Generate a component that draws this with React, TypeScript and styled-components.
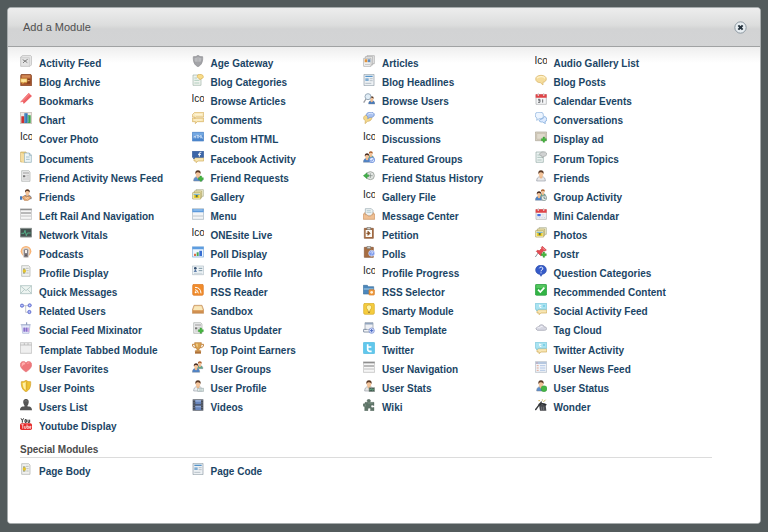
import React from "react";
import styled, { createGlobalStyle } from "styled-components";

const GlobalStyle = createGlobalStyle`
  * { box-sizing: border-box; }
  body {
    margin: 0;
    background: #535b5c;
    font-family: "Liberation Sans", Arial, sans-serif;
  }
`;

const Page = styled.main`
  min-height: 100vh;
  display: flex;
  padding: 7px 7px 8px;
`;

const Dialog = styled.section`
  flex: 1;
  min-width: 0;
  display: flex;
  flex-direction: column;
  border: 1px solid #a6abac;
  border-radius: 4px;
  background: #fff;
  overflow: hidden;
`;

const Header = styled.header`
  display: flex;
  align-items: center;
  justify-content: space-between;
  height: 39px;
  padding: 0 13px 0 15px;
  border-bottom: 1px solid #a0a2a3;
  background: linear-gradient(#ededed, #dcdddd 45%, #d2d3d4 55%, #d3d4d5);
`;

const Title = styled.h1`
  margin: 0;
  font-size: 11px;
  line-height: 16px;
  font-weight: 400;
  color: #505050;
`;

const CloseButton = styled.button`
  display: flex;
  width: 13px;
  height: 13px;
  padding: 0;
  border: 0;
  background: none;
  cursor: pointer;
`;

const Body = styled.div`
  flex: 1;
  padding: 8px 48px 24px 12px;
  background: linear-gradient(#eeeeee, #ffffff 16px);
`;

const ModuleGrid = styled.ul<{ $tall?: boolean }>`
  display: grid;
  grid-template-columns: repeat(4, 1fr);
  grid-auto-rows: minmax(19px, 1fr);
  min-height: ${(p) => (p.$tall ? "382px" : "19px")};
  margin: 0;
  padding: 0 6px 0 0;
  list-style: none;
`;

const ModuleLink = styled.a`
  display: flex;
  align-items: flex-start;
  gap: 7px;
  font-size: 10px;
  line-height: 12px;
  font-weight: 700;
  color: #1b4565;
  text-decoration: none;
  white-space: nowrap;
  &:hover { text-decoration: underline; }
`;

const Glyph = styled.svg`
  flex: none;
  display: block;
  width: 12px;
  height: 12px;
`;

const MissingIcon = styled.span`
  flex: none;
  width: 12px;
  overflow: hidden;
  font-weight: 400;
  color: #222;
`;

const Label = styled.span`
  padding-top: 3px;
`;

const SectionTitle = styled.h2`
  margin: 7px 0 5px;
  padding-bottom: 1px;
  border-bottom: 1px solid #dcdcdc;
  font-size: 10px;
  line-height: 12px;
  font-weight: 700;
  color: #4c4c4c;
`;

/* Shared icon parts, drawn on a 36 unit square */

const Person = ({ hair = "#5b3a26", shirt = "#5c8fce" }: { hair?: string; shirt?: string }) => (
  <g>
    <path d="M5 33c0-9 4-12 9-13h8c6 1 9 5 9 13z" fill={shirt} stroke="#777f8c" strokeWidth="1.5" />
    <path d="M14 17h8v5l-4 5-4-5z" fill="#eeb887" />
    <ellipse cx="18" cy="12" rx="7" ry="8" fill="#f3c49b" />
    <path d="M10 12C9 4 13 1 18 1s9 3 8 11c-3-5-7-5-10-5-3 1-4 3-6 5z" fill={hair} />
  </g>
);

const Group = () => (
  <>
    <g transform="translate(11 0) scale(.7)"><Person hair="#a85b28" shirt="#60a58c" /></g>
    <g transform="translate(-3 6) scale(.84)"><Person hair="#4c3023" shirt="#4d83c8" /></g>
  </>
);

const Plus = () => (
  <path d="M24 18h5v5h5v6h-5v5h-5v-5h-5v-6h5z" fill="#46b83f" stroke="#2c8a2b" strokeWidth="1" />
);

const Sheet = ({ fill = "#f1f1ef" }: { fill?: string }) => (
  <path d="M5 2h21l4 4v28H5z" fill={fill} stroke="#a9adab" strokeWidth="2" />
);

const NewsSheet = () => (
  <>
    <Sheet fill="#ececec" />
    <path d="M9 9h18" stroke="#9a9a9a" strokeWidth="3" />
    <path d="M9 16h7v6H9z" fill="#777" />
    <path d="M19 16h8M19 21h8M9 27h18" stroke="#b3b3b3" strokeWidth="2" />
  </>
);

const TwoBubbles = ({ top, edge }: { top: string; edge: string }) => (
  <>
    <path d="M6 20h29v10H18l-6 5v-5H6z" fill="#f8e6b4" stroke="#ceaa55" strokeWidth="2" />
    <path d="M1 1h34v18H10l-5 5v-5H1z" fill={top} stroke={edge} strokeWidth="2" />
  </>
);

const Rails = () => (
  <>
    <path d="M1 2h34v32H1z" fill="#f6f6f6" stroke="#b5b5b5" strokeWidth="2" />
    <path d="M1 3h34v4H1z" fill="#8e8e8e" />
    <path d="M3 15h30" stroke="#7d7d7d" strokeWidth="3" />
    <path d="M3 24h30" stroke="#a4a4a4" strokeWidth="2" />
  </>
);

const Photos = () => (
  <>
    <path d="M12 2h22v20H12z" fill="#f5f2d4" stroke="#a5a98c" strokeWidth="2" />
    <path d="M7 6h22v20H7z" fill="#f9f1b9" stroke="#a69c60" strokeWidth="2" />
    <path d="M2 11h24v19H2z" fill="#fffbe0" stroke="#a6994f" strokeWidth="2" />
    <path d="M5 14h18v13H5z" fill="#edcf2c" />
    <path d="M5 14h18v4H5z" fill="#7fb8d8" />
    <path d="M11 18h6v7h-6z" fill="#5b6e4d" />
  </>
);

const Calendar = ({ children }: { children: React.ReactNode }) => (
  <>
    <path d="M3 5h31v29H3z" fill="#f5f6f8" stroke="#a7a9ad" strokeWidth="2" />
    <path d="M2 4h33v10H2z" fill="#df4548" />
    <path d="M10 1v7M26 1v7" stroke="#fff" strokeWidth="4" />
    <path d="M10 1v6M26 1v6" stroke="#956061" strokeWidth="1.5" />
    {children}
  </>
);

const Clipboard = () => (
  <>
    <path d="M4 4h27v30H4z" fill="#a66d42" stroke="#8a5636" strokeWidth="2" />
    <path d="M12 1h11v7H12z" fill="#d1d1ce" stroke="#77736c" strokeWidth="2" />
  </>
);

const ShieldShape = "M18 1c5 4 10 4 14 4 1 15-3 25-14 30C7 30 3 20 4 5c4 0 9 0 14-4z";

const Twitterish = () => (
  <>
    <TwoBubbles top="#a9e3f1" edge="#74c3da" />
    <path d="M14 5v6q0 3 5 3M14 8h5" fill="none" stroke="#fff" strokeWidth="3" />
    <path d="M24 6h6v6h-6z" fill="#7fd0e7" />
  </>
);

const icons: Record<string, React.ReactNode> = {
  sketch: (
    <>
      <path d="M9 1h22l4 4v24l-5 5H2V6z" fill="#e4e4e4" stroke="#b0b0b0" strokeWidth="2" />
      <path d="M3 8h25v25" fill="none" stroke="#c5c5c5" strokeWidth="2" />
      <path d="M8 14l7 4 8-5M9 24l6-6 7 5" fill="none" stroke="#808080" strokeWidth="3" />
    </>
  ),
  shieldGray: (
    <>
      <path d={ShieldShape} fill="#a2a3a7" stroke="#8f9094" strokeWidth="2" />
      <path d="M18 5c4 3 8 4 10 4 0 4 0 7-2 11H9C7 16 8 12 8 9c4 0 7-1 10-4z" fill="#b9babd" />
      <path d="M18 5v26" stroke="#a9aaae" strokeWidth="2" />
    </>
  ),
  articles: (
    <>
      <path d="M12 2h22v24H12z" fill="#eee" stroke="#a2a2a2" strokeWidth="2" />
      <path d="M7 5h22v25H7z" fill="#ececec" stroke="#a2a2a2" strokeWidth="2" />
      <path d="M2 10h22v24H2z" fill="#f8f8f7" stroke="#a2a2a2" strokeWidth="2" />
      <path d="M5 13h8v9H5z" fill="#e0933c" />
      <path d="M14 13h8v9h-8z" fill="#668fbd" />
      <path d="M6 28h15" stroke="#a7a7a7" strokeWidth="2" />
    </>
  ),
  archive: (
    <>
      <path d="M4 1h28l3 4v30H2V5z" fill="#aa5930" stroke="#7d401f" strokeWidth="2" />
      <path d="M5 4h26v7H5z" fill="#d38a55" />
      <path d="M20 15h11v14H20z" fill="#883e1d" />
      <path d="M2 14h19v11h-9l-4 4v-4H2z" fill="#ffe69c" stroke="#dba33c" strokeWidth="2" />
      <path d="M23 20h6" stroke="#e7b183" strokeWidth="3" />
    </>
  ),
  category: (
    <>
      <path d="M3 3h24v31H3z" fill="#f0f4ef" stroke="#9eb4a7" strokeWidth="2" />
      <path d="M7 12h8M7 19h15M7 27h15" stroke="#93bba6" strokeWidth="2" />
      <path d="M17 3c5-4 17-2 17 5 0 4-3 6-7 6l-3 4-1-4c-7-1-9-7-6-11z" fill="#f8dc8a" stroke="#d9b055" strokeWidth="2" />
    </>
  ),
  headline: (
    <>
      <path d="M3 1h30v34H3z" fill="#edf1f4" stroke="#8b98a3" strokeWidth="2" />
      <path d="M7 7h22" stroke="#5694c9" strokeWidth="4" />
      <path d="M7 13h10v8H7z" fill="#81add2" />
      <path d="M20 14h9M20 20h9M7 28h18" stroke="#9ba8b2" strokeWidth="2" />
    </>
  ),
  bubble: (
    <>
      <path d="M18 4c9 0 16 4 16 11 0 5-4 9-10 10v8l-8-7C8 26 2 22 2 15 2 8 9 4 18 4z" fill="#f5dc9b" stroke="#d6b369" strokeWidth="2" />
      <path d="M6 13c2-5 20-8 24 0" fill="none" stroke="#fff2ca" strokeWidth="4" />
    </>
  ),
  bookmark: (
    <>
      <path d="M26 0l10 9L11 33l-2-6-9 1z" fill="#ee6266" />
      <path d="M26 1l4 3L7 27l-5 0z" fill="#f58284" />
    </>
  ),
  search: (
    <>
      <g transform="translate(13 9) scale(.73)"><Person shirt="#477bbc" /></g>
      <path d="M9 18L2 29" stroke="#9a9ba0" strokeWidth="4" />
      <circle cx="15" cy="11" r="9" fill="#dceaf4" fillOpacity=".85" stroke="#9aabba" strokeWidth="3" />
    </>
  ),
  calendarDate: (
    <Calendar>
      <path d="M9 19h6v9M10 23h5M9 28h6M23 19v10" fill="none" stroke="#6e7074" strokeWidth="3" />
    </Calendar>
  ),
  calendarMini: (
    <Calendar>
      <path d="M7 18h10v7H7z" fill="#456fe0" />
      <path d="M20 19h10M20 24h10M7 29h23" stroke="#b8bed2" strokeWidth="2" strokeDasharray="3 2" />
    </Calendar>
  ),
  chart: (
    <>
      <path d="M1 1h34v34H1z" fill="#eee8e3" stroke="#b6aaa1" strokeWidth="2" />
      <path d="M4 13h9v20H4z" fill="#cb3230" />
      <path d="M13 4h10v29H13z" fill="#3575bc" />
      <path d="M23 10h9v23h-9z" fill="#3ca64b" />
      <path d="M15 6v25M25 12v19" stroke="#70b6cc" strokeWidth="2" />
    </>
  ),
  comments: (
    <>
      <path d="M1 18h34v11H16l-6 6v-6H1z" fill="#f7e3ad" stroke="#d4ad5c" strokeWidth="2" />
      <path d="M8 1h27v14H13l-5 5v-5H1V8z" fill="#f9e9bc" stroke="#d4ad5c" strokeWidth="2" />
      <path d="M9 8h21M6 24h23" stroke="#fff5d9" strokeWidth="3" />
    </>
  ),
  commentsRound: (
    <>
      <path d="M12 9c9-1 16 4 14 11-1 5-7 8-12 8l-8 7 1-9C-2 21 1 10 12 9z" fill="#f4d88a" stroke="#d0ae62" strokeWidth="2" />
      <path d="M20 1c8-2 15 2 14 8-1 5-6 8-13 7l-7 4 1-6C6 10 10 2 20 1z" fill="#a9c1ef" stroke="#6c8fcf" strokeWidth="2" />
      <path d="M14 8c3-5 12-5 16-2" fill="none" stroke="#e0eafe" strokeWidth="3" />
    </>
  ),
  conversation: (
    <>
      <path d="M8 1h10q7 0 7 7v5q0 7-7 7h-5l-8 5 1-7q-5-2-5-6V8q0-7 7-7z" fill="#edf5ff" stroke="#83acd9" strokeWidth="2" />
      <path d="M28 13q7 2 7 8v2q0 5-5 6l1 6-8-5h-4q-6 0-7-5l6-3q9-2 10-9z" fill="#dceaff" stroke="#73a1d5" strokeWidth="2" />
    </>
  ),
  html: (
    <>
      <path d="M1 4h34v26H1z" fill="#4a86ce" stroke="#4f83c4" strokeWidth="2" />
      <path d="M2 5h32v8H2z" fill="#73a8e2" />
      <path d="M6 13v9M11 13v9M6 17h5M13 13h6M16 13v9M20 22v-9l3 4 3-4v9M29 13v8h4" fill="none" stroke="#eaf5ff" strokeWidth="2" />
    </>
  ),
  ad: (
    <>
      <path d="M1 3h34v26H1z" fill="#e0dacd" stroke="#a8a091" strokeWidth="2" />
      <path d="M5 7h26v18H5z" fill="none" stroke="#beb5a5" strokeWidth="2" />
      <Plus />
    </>
  ),
  documents: (
    <>
      <path d="M2 3h15l4 4v26H2z" fill="#e8cd7d" stroke="#c9a95c" strokeWidth="2" />
      <path d="M13 6h15l6 6v22H13z" fill="#edf5f7" stroke="#8aa8b5" strokeWidth="2" />
      <path d="M28 6v7h6M18 18h11M18 25h11" fill="none" stroke="#85a9b9" strokeWidth="2" />
      <path d="M3 5v26l9 4V9z" fill="#f5dda0" />
    </>
  ),
  facebook: (
    <>
      <TwoBubbles top="#3c66a8" edge="#345b98" />
      <path d="M28 4h-2q-4 0-4 4v9M18 10h9" fill="none" stroke="#fff" strokeWidth="3" />
    </>
  ),
  groupFeatured: (
    <>
      <Group />
      <circle cx="27" cy="27" r="8" fill="#dce8ff" stroke="#557bd1" strokeWidth="2" />
      <path d="M22 27l4 4 6-8" fill="none" stroke="#4169cf" strokeWidth="2" />
    </>
  ),
  groupClock: (
    <>
      <Group />
      <circle cx="27" cy="27" r="8" fill="#e3ece9" stroke="#7d8c89" strokeWidth="2" />
      <path d="M27 22v6h5" fill="none" stroke="#496663" strokeWidth="2" />
    </>
  ),
  group: <Group />,
  forum: (
    <>
      <path d="M3 3h22v31H3z" fill="#edf3f2" stroke="#91a8a5" strokeWidth="2" />
      <path d="M7 12h8M7 19h13M7 27h13" stroke="#8dada5" strokeWidth="2" />
      <path d="M22 3c7-2 14 1 13 7-1 4-4 6-8 6l-6 5v-6C10 13 13 5 22 3z" fill="#d0d2d2" stroke="#9ba09f" strokeWidth="2" />
    </>
  ),
  news: <NewsSheet />,
  personAdd: <><Person /><Plus /></>,
  history: (
    <>
      <circle cx="22" cy="17" r="12" fill="#e2e5e2" stroke="#a6aca6" strokeWidth="3" />
      <path d="M22 10v14M15 17h14" fill="none" stroke="#7a8581" strokeWidth="2" />
      <path d="M1 17L12 8v6h5v6h-5v6z" fill="#42af49" stroke="#258a32" strokeWidth="1" />
    </>
  ),
  person: <Person shirt="#e7e7e8" />,
  handshake: (
    <>
      <g transform="translate(6 0) scale(.9)"><Person /></g>
      <path d="M0 22h7v10H0z" fill="#477abc" />
      <path d="M7 24l7-4 7 3 7-2 6 5-10 8H13z" fill="#e9ab74" stroke="#b57947" strokeWidth="2" />
      <path d="M15 26l9 5M20 24l7 4" stroke="#ffe0bd" strokeWidth="2" />
    </>
  ),
  photos: <Photos />,
  rails: <Rails />,
  menu: (
    <>
      <path d="M1 2h34v32H1z" fill="#f3f5f7" stroke="#9cabb7" strokeWidth="2" />
      <path d="M1 3h34v10H1z" fill="#5c9add" />
      <path d="M4 6h28" stroke="#a9d0f4" strokeWidth="3" />
      <path d="M3 24h30" stroke="#a3b0b9" strokeWidth="2" />
    </>
  ),
  inbox: (
    <>
      <path d="M7 2h18l5 5v17H7z" fill="#edf2f3" stroke="#95a8ad" strokeWidth="2" />
      <path d="M11 8h12M11 13h14" stroke="#9bbcc6" strokeWidth="2" />
      <path d="M1 18l5-4v6h6l3 4h8l3-4h4v-6l5 4v16H1z" fill="#f0c094" stroke="#c98f5e" strokeWidth="2" />
    </>
  ),
  vitals: (
    <>
      <path d="M1 4h34v26H1z" fill="#45524f" stroke="#8a9290" strokeWidth="3" />
      <path d="M4 19h8l3-9 4 16 3-8h10" fill="none" stroke="#5bd6a0" strokeWidth="2" />
    </>
  ),
  petition: (
    <>
      <Clipboard />
      <path d="M8 9h19v21H8z" fill="#fbfaf6" />
      <path d="M10 19h9M15 13l6 6-6 6z" fill="#88542c" stroke="#88542c" strokeWidth="3" />
    </>
  ),
  polls: (
    <>
      <Clipboard />
      <circle cx="26" cy="22" r="9" fill="#7d9bed" stroke="#e4eafd" strokeWidth="2" />
      <path d="M23 20q0-3 4-3 5 1 1 5l-2 2v1M26 27v2" fill="none" stroke="#fff" strokeWidth="2" />
    </>
  ),
  podcast: (
    <>
      <circle cx="18" cy="16" r="16" fill="#f8b273" />
      <circle cx="18" cy="16" r="12" fill="#f6d4b0" />
      <rect x="10" y="8" width="16" height="27" rx="5" fill="#88858a" stroke="#d8d2ce" strokeWidth="3" />
      <path d="M15 12h6v9h-6z" fill="#f4f1ef" />
      <circle cx="18" cy="28" r="3" fill="#5b5557" />
    </>
  ),
  pollChart: (
    <>
      <path d="M1 2h34v31H1z" fill="#edf6ff" stroke="#70a3d8" strokeWidth="2" />
      <path d="M1 3h34v7H1z" fill="#5d9de0" />
      <path d="M6 23h6v7H6z" fill="#df6c4c" />
      <path d="M14 19h6v11h-6z" fill="#4ba75a" />
      <path d="M22 14h8v16h-8z" fill="#386ed1" />
    </>
  ),
  pin: (
    <>
      <path d="M10 20L1 33" stroke="#8e969d" strokeWidth="3" />
      <path d="M22 1l12 11-4 3-4-1-6 7 1 6-4 2L4 16l3-3 6 1 7-7-1-3z" fill="#e34a50" stroke="#c8434a" strokeWidth="2" />
      <path d="M22 5l8 8" stroke="#ff9797" strokeWidth="3" />
      <Plus />
    </>
  ),
  profile: (
    <>
      <Sheet />
      <path d="M9 10h7v16H9z" fill="#9aa28f" />
      <circle cx="13" cy="18" r="5" fill="#e4c32c" />
      <path d="M18 10h8M19 17h7M19 24h7" stroke="#a2a99e" strokeWidth="2" />
    </>
  ),
  info: (
    <>
      <path d="M1 3h34v26H1z" fill="#eff4f7" stroke="#adbbc4" strokeWidth="2" />
      <circle cx="10" cy="10" r="4" fill="#344f70" />
      <path d="M5 20q5-10 10 0z" fill="#375e94" />
      <path d="M20 10h11M20 17h11" stroke="#7e98a5" strokeWidth="3" />
      <path d="M6 25h25" stroke="#b4c3cb" strokeWidth="2" />
    </>
  ),
  question: (
    <>
      <path d="M18 1C8 1 2 7 2 15s6 12 12 13l4 6 4-6c8-2 12-6 12-13C34 6 28 1 18 1z" fill="#365bc8" stroke="#3150ae" strokeWidth="2" />
      <path d="M13 10q1-4 6-4 7 2 4 7l-5 4v2M18 22v3" fill="none" stroke="#e9f0ff" strokeWidth="3" />
    </>
  ),
  mail: (
    <>
      <path d="M1 5h34v24H1z" fill="#edf4f1" stroke="#9eb8b5" strokeWidth="2" />
      <path d="M2 6l16 14L34 6M2 28l12-12M34 28L22 16" fill="none" stroke="#a3bbb9" strokeWidth="2" />
    </>
  ),
  rss: (
    <>
      <rect x="2" y="1" width="32" height="33" rx="4" fill="#f08c2c" stroke="#dc7a2b" strokeWidth="2" />
      <circle cx="11" cy="25" r="3" fill="#fff" />
      <path d="M9 17q9 0 10 11M9 10q17 0 18 18" fill="none" stroke="#fff" strokeWidth="3" />
    </>
  ),
  rssFolder: (
    <>
      <path d="M1 4h12l3 4h16v22H1z" fill="#4b87bd" stroke="#43769f" strokeWidth="2" />
      <path d="M2 12h29v6H2z" fill="#7bacd2" />
      <rect x="18" y="17" width="16" height="16" rx="2" fill="#f29b3d" stroke="#d47826" strokeWidth="2" />
      <circle cx="26" cy="25" r="4" fill="#fff2db" />
    </>
  ),
  check: (
    <>
      <rect x="1" y="1" width="34" height="33" rx="4" fill="#32b445" stroke="#279c3c" strokeWidth="2" />
      <path d="M4 3h28v9H4z" fill="#55c65f" />
      <path d="M9 17l7 7L28 11" fill="none" stroke="#fff" strokeWidth="5" />
    </>
  ),
  related: (
    <>
      <path d="M12 8h12M17 8v20h6" fill="none" stroke="#a9abb5" strokeWidth="2" />
      <g fill="#8390eb" stroke="#5765c5" strokeWidth="2"><circle cx="6" cy="8" r="5" /><circle cx="29" cy="7" r="5" /><circle cx="28" cy="27" r="5" /></g>
      <path d="M4 8h4M27 7h4M26 27h4" stroke="#dde3ff" strokeWidth="3" />
    </>
  ),
  sandbox: (
    <>
      <path d="M6 7h24l5 14v10H1V21z" fill="#edc48e" stroke="#c08d58" strokeWidth="2" />
      <path d="M8 10h20l4 11H4z" fill="#f9e8ba" />
      <path d="M2 21h32v9H2z" fill="#ce8d4e" />
      <path d="M4 23h28" stroke="#efba77" strokeWidth="2" />
    </>
  ),
  bulb: (
    <>
      <rect x="2" y="1" width="32" height="33" rx="4" fill="#f5cc3d" stroke="#d3aa2c" strokeWidth="2" />
      <path d="M18 6c-7 0-10 7-6 12l3 4v4h6v-4l3-4c4-6 1-12-6-12z" fill="#fff5ab" stroke="#c89c26" strokeWidth="2" />
      <path d="M15 28h6" stroke="#937737" strokeWidth="3" />
    </>
  ),
  twitterActivity: <Twitterish />,
  mixer: (
    <>
      <path d="M5 9h25l-3 25H8z" fill="#e5eaf9" stroke="#a6afd5" strokeWidth="2" />
      <path d="M2 8h30" stroke="#adb7d1" strokeWidth="3" />
      <path d="M20 1v7" stroke="#7b89af" strokeWidth="3" />
      <path d="M9 17h18v12H9z" fill="#b49fe2" />
      <path d="M13 17v12M20 17v12" stroke="#7c6cc4" strokeWidth="3" />
      <path d="M23 19h4v10h-4z" fill="#d3a6df" />
    </>
  ),
  status: <><NewsSheet /><Plus /></>,
  template: (
    <>
      <path d="M6 2h24v21H6z" fill="#eef0f4" stroke="#8993a2" strokeWidth="2" />
      <path d="M6 5h24" stroke="#92a5bd" strokeWidth="5" />
      <path d="M2 30h20M2 30v-8h9" fill="none" stroke="#8593a6" strokeWidth="3" />
      <circle cx="26" cy="26" r="8" fill="#e1e8ff" stroke="#667ec8" strokeWidth="2" />
      <path d="M26 21v10M21 26h10" stroke="#4566c0" strokeWidth="3" />
    </>
  ),
  cloud: (
    <>
      <path d="M7 25q-9-4 0-10 2-1 4 0c2-9 15-9 17 0 9-1 10 10 0 10z" fill="#d6d7e2" stroke="#9c9daa" strokeWidth="2" />
      <path d="M7 18q5-3 7 0 2-7 9-4" fill="none" stroke="#f4f4fa" strokeWidth="3" />
    </>
  ),
  tabs: (
    <>
      <path d="M1 2h34v32H1z" fill="#efefef" stroke="#b5b5b5" strokeWidth="2" />
      <path d="M1 9h12V3M13 9h22M24 3v6" fill="none" stroke="#ababab" strokeWidth="2" />
    </>
  ),
  trophy: (
    <>
      <path d="M8 7H1q1 12 12 10M28 7h7q-1 12-12 10" fill="none" stroke="#c3843b" strokeWidth="3" />
      <path d="M8 2h20q0 16-7 18v6h5v3H10v-3h5v-6Q8 18 8 2z" fill="#d9a251" stroke="#b97b3b" strokeWidth="2" />
      <path d="M12 5h5v11q-5-3-5-11z" fill="#f6d38a" />
      <path d="M9 29h18v6H9z" fill="#ae7137" />
    </>
  ),
  twitter: (
    <>
      <rect x="1" y="1" width="34" height="34" rx="3" fill="#61c7ec" stroke="#52b9e0" strokeWidth="2" />
      <path d="M14 7v14q0 7 7 7h5M14 15h11" fill="none" stroke="#fff" strokeWidth="5" />
    </>
  ),
  heart: (
    <>
      <path d="M18 33C10 27 1 21 1 11 1 1 13-2 18 6 23-2 35 1 35 11c0 10-9 16-17 22z" fill="#ef777b" stroke="#e4797d" strokeWidth="2" />
      <path d="M5 12Q4 4 12 4q3 0 4 5Q9 10 5 18zM20 8q4-6 10-2" fill="#ffaeae" />
    </>
  ),
  userNews: (
    <>
      <path d="M1 2h34v32H1z" fill="#f1f4f9" stroke="#a9b3c0" strokeWidth="2" />
      <path d="M2 3h32v6H2z" fill="#b5c7df" />
      <path d="M4 6h4" stroke="#dc7777" strokeWidth="2" />
      <path d="M5 14h6M5 21h6M5 28h6" stroke="#e2a994" strokeWidth="3" />
      <path d="M15 14h16M15 21h16M15 28h16" stroke="#8fb0dc" strokeWidth="2" />
    </>
  ),
  shieldGold: (
    <>
      <path d={ShieldShape} fill="#efc331" stroke="#cf9d2c" strokeWidth="2" />
      <path d="M17 5v25Q8 25 8 9q5 0 9-4z" fill="#fff0a3" />
      <path d="M20 5v25" stroke="#cf9f30" strokeWidth="2" />
    </>
  ),
  profilePerson: (
    <>
      <Person shirt="#eceff0" />
      <path d="M17 25h18v9H17z" fill="#edf2f2" stroke="#9baaaa" strokeWidth="2" />
      <path d="M21 30h11" stroke="#8baba4" strokeWidth="2" />
    </>
  ),
  statsPerson: (
    <>
      <Person shirt="#e6e6e4" />
      <path d="M18 23h17v12H18z" fill="#435b50" stroke="#969e98" strokeWidth="2" />
      <path d="M20 29h4l2-3 3 5 3-3" fill="none" stroke="#76ce9d" strokeWidth="2" />
    </>
  ),
  online: <><Person /><circle cx="27" cy="26" r="9" fill="#45b545" stroke="#2c9132" strokeWidth="1" /></>,
  silhouette: (
    <>
      <path d="M18 0c8 0 10 8 7 15-1 3-3 4-3 7 9 1 14 3 14 12H0c0-9 5-11 14-12 0-3-2-4-3-7C8 8 10 0 18 0z" fill="#555" />
      <path d="M14 7q4-4 8 0" fill="none" stroke="#858585" strokeWidth="2" />
    </>
  ),
  video: (
    <>
      <path d="M2 1h32v34H2z" fill="#464d5b" />
      <path d="M10 3h17v13H10zM10 20h17v13H10z" fill="#6785bd" />
      <path d="M10 3h17v5H10zM10 20h17v5H10z" fill="#92aad6" />
      <path d="M6 3v31M30 3v31" stroke="#a9aeb8" strokeWidth="2" strokeDasharray="3 4" />
    </>
  ),
  puzzle: (
    <>
      <path d="M14 10q-5-8 3-9 9 1 4 9h12v10q-8-5-9 2 1 7 9 3v10H22q3-8-4-8-5 1-3 8H5V23q-5 0-5-5 0-6 6-4v-4z" fill="#5f7569" stroke="#526158" strokeWidth="1" />
      <path d="M15 12h14M7 16v6" stroke="#8ba193" strokeWidth="2" />
    </>
  ),
  wand: (
    <>
      <path d="M12 18h20l2 17H15z" fill="#484a4e" />
      <path d="M11 17q11-5 23 1" fill="none" stroke="#292c30" strokeWidth="5" />
      <path d="M20 23v10M26 23v10" stroke="#8a8d92" strokeWidth="2" />
      <path d="M1 33L20 8" stroke="#34373a" strokeWidth="4" />
      <path d="M10 5h5M25 9l7-7M22 1v4" stroke="#d3b967" strokeWidth="3" />
    </>
  ),
  youtube: (
    <>
      <rect x="0" y="16" width="36" height="20" rx="5" fill="#e52b2b" />
      <path d="M3 1l4 6 4-6M7 7v7M15 5h4v8h-4zM24 5v8h5V5" fill="none" stroke="#303030" strokeWidth="3" />
      <path d="M4 20h7M8 20v12M13 24v7h5v-7M21 19v12h5v-6h-5M33 31h-4v-6h4v3h-4" fill="none" stroke="#fff" strokeWidth="2" />
    </>
  ),
};

type ModuleEntry = [string, string?];

const modules: ModuleEntry[] = [
  ["Activity Feed", "sketch"], ["Age Gateway", "shieldGray"], ["Articles", "articles"], ["Audio Gallery List"],
  ["Blog Archive", "archive"], ["Blog Categories", "category"], ["Blog Headlines", "headline"], ["Blog Posts", "bubble"],
  ["Bookmarks", "bookmark"], ["Browse Articles"], ["Browse Users", "search"], ["Calendar Events", "calendarDate"],
  ["Chart", "chart"], ["Comments", "comments"], ["Comments", "commentsRound"], ["Conversations", "conversation"],
  ["Cover Photo"], ["Custom HTML", "html"], ["Discussions"], ["Display ad", "ad"],
  ["Documents", "documents"], ["Facebook Activity", "facebook"], ["Featured Groups", "groupFeatured"], ["Forum Topics", "forum"],
  ["Friend Activity News Feed", "news"], ["Friend Requests", "personAdd"], ["Friend Status History", "history"], ["Friends", "person"],
  ["Friends", "handshake"], ["Gallery", "photos"], ["Gallery File"], ["Group Activity", "groupClock"],
  ["Left Rail And Navigation", "rails"], ["Menu", "menu"], ["Message Center", "inbox"], ["Mini Calendar", "calendarMini"],
  ["Network Vitals", "vitals"], ["ONEsite Live"], ["Petition", "petition"], ["Photos", "photos"],
  ["Podcasts", "podcast"], ["Poll Display", "pollChart"], ["Polls", "polls"], ["Postr", "pin"],
  ["Profile Display", "profile"], ["Profile Info", "info"], ["Profile Progress"], ["Question Categories", "question"],
  ["Quick Messages", "mail"], ["RSS Reader", "rss"], ["RSS Selector", "rssFolder"], ["Recommended Content", "check"],
  ["Related Users", "related"], ["Sandbox", "sandbox"], ["Smarty Module", "bulb"], ["Social Activity Feed", "twitterActivity"],
  ["Social Feed Mixinator", "mixer"], ["Status Updater", "status"], ["Sub Template", "template"], ["Tag Cloud", "cloud"],
  ["Template Tabbed Module", "tabs"], ["Top Point Earners", "trophy"], ["Twitter", "twitter"], ["Twitter Activity", "twitterActivity"],
  ["User Favorites", "heart"], ["User Groups", "group"], ["User Navigation", "rails"], ["User News Feed", "userNews"],
  ["User Points", "shieldGold"], ["User Profile", "profilePerson"], ["User Stats", "statsPerson"], ["User Status", "online"],
  ["Users List", "silhouette"], ["Videos", "video"], ["Wiki", "puzzle"], ["Wonder", "wand"],
  ["Youtube Display", "youtube"],
];

const specialModules: ModuleEntry[] = [["Page Body", "profile"], ["Page Code", "headline"]];

const ModuleList = ({ entries, tall }: { entries: ModuleEntry[]; tall?: boolean }) => (
  <ModuleGrid $tall={tall}>
    {entries.map(([name, icon], index) => (
      <li key={index}>
        <ModuleLink href="#">
          {icon ? (
            <Glyph viewBox="0 0 36 36" aria-hidden="true">{icons[icon]}</Glyph>
          ) : (
            <MissingIcon aria-hidden="true">Ico</MissingIcon>
          )}
          <Label>{name}</Label>
        </ModuleLink>
      </li>
    ))}
  </ModuleGrid>
);

export default function App() {
  return (
    <>
      <GlobalStyle />
      <Page>
        <Dialog role="dialog" aria-labelledby="dialog-title">
          <Header>
            <Title id="dialog-title">Add a Module</Title>
            <CloseButton type="button" aria-label="Close">
              <svg width="13" height="13" viewBox="0 0 39 39" aria-hidden="true">
                <circle cx="19.5" cy="19.5" r="17" fill="#e8eef2" stroke="#8c98a0" strokeWidth="3" />
                <path d="M13 13l13 13M26 13L13 26" stroke="#26343f" strokeWidth="6" />
              </svg>
            </CloseButton>
          </Header>
          <Body>
            <ModuleList entries={modules} tall />
            <SectionTitle>Special Modules</SectionTitle>
            <ModuleList entries={specialModules} />
          </Body>
        </Dialog>
      </Page>
    </>
  );
}
